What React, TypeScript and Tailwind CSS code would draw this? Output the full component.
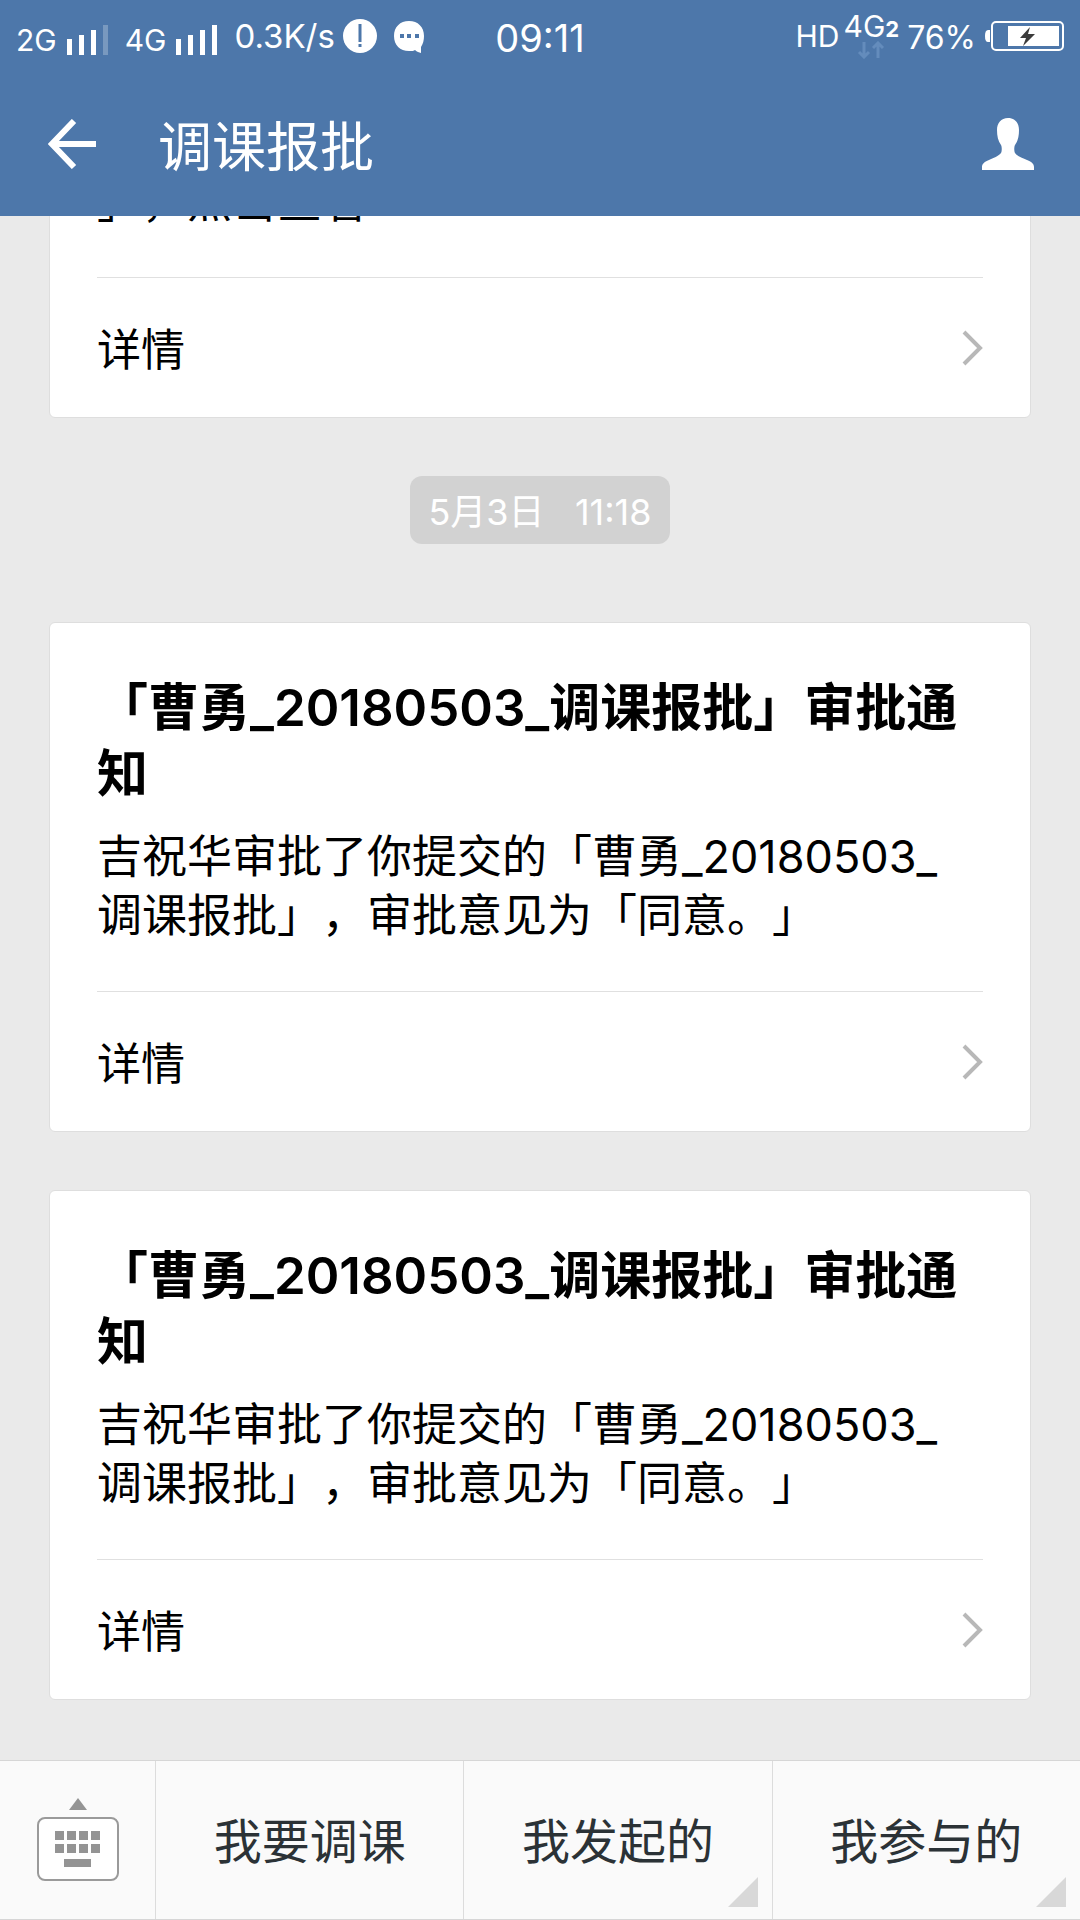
import type { ReactNode } from "react";

type ApprovalCardProps = {
  title?: string;
  children: ReactNode;
};

function SignalBars({ weak = false }: { weak?: boolean }) {
  return (
    <svg width="42" height="30" viewBox="0 0 42 30" fill="currentColor" aria-hidden="true">
      <rect x="0" y="14" width="5" height="16" />
      <rect x="12" y="10" width="5" height="20" />
      <rect x="24" y="5" width="5" height="25" />
      <rect x="36" y="0" width="5" height="30" opacity={weak ? 0.25 : 1} />
    </svg>
  );
}

function StatusBar() {
  return (
    <div className="grid h-[72px] grid-cols-[1fr_auto_1fr] items-center px-4 text-[32px] leading-[36px]">
      <div className="flex items-center">
        <span className="pt-2 text-[30px]">2G</span>
        <span className="ml-2.5 pt-2">
          <SignalBars weak />
        </span>
        <span className="ml-4 pt-2 text-[30px]">4G</span>
        <span className="ml-2.5 pt-2">
          <SignalBars />
        </span>
        <span className="ml-4 text-[33px]">0.3K/s</span>
        <svg className="ml-2" width="34" height="34" viewBox="0 0 34 34" aria-hidden="true">
          <circle cx="17" cy="17" r="17" fill="white" />
          <path d="M17 5v18M17 25v3" stroke="#4d77aa" strokeWidth="3" />
        </svg>
        <svg className="ml-4" width="32" height="34" viewBox="0 0 32 34" aria-hidden="true">
          <path d="M16 2C7 2 1 8 1 17s6 15 15 15c3 0 5 0 6-1 2 2 4 2 6 3v-6c2-3 3-7 3-11C31 8 25 2 16 2Z" fill="white" />
          <path d="M7 15h4v4H7zM14 15h4v4h-4zM22 15h4v4h-4z" fill="#4d77aa" />
        </svg>
      </div>
      <time className="pt-1 text-[38px]">09:11</time>
      <div className="flex items-center justify-end">
        <span className="text-[30px]">HD</span>
        <div className="ml-1 flex flex-col items-center">
          <span className="text-[30px] leading-[24px]">
            4G<b className="text-[22px]">2</b>
          </span>
          <svg width="28" height="18" viewBox="0 0 28 18" fill="none" stroke="#648cbc" strokeWidth="3" aria-hidden="true">
            <path d="M7 1v15M2 11l5 5 5-5M21 17V2M16 7l5-5 5 5" />
          </svg>
        </div>
        <span className="ml-2 pt-1">76%</span>
        <svg className="ml-2" width="80" height="32" viewBox="0 0 80 32" aria-hidden="true">
          <path d="M6 10H4q-3 0-3 6t3 6h2z" fill="white" />
          <rect x="8" y="2" width="71" height="28" rx="4" fill="none" stroke="white" strokeWidth="2" />
          <rect x="24" y="6" width="51" height="20" fill="white" />
          <path d="m46 7-10 11h6l-3 8 12-12h-7z" fill="#3b3b3b" />
        </svg>
      </div>
    </div>
  );
}

function NavBar() {
  return (
    <div className="flex h-36 items-center pl-12 pr-[46px]">
      <button type="button" aria-label="返回">
        <svg width="48" height="50" viewBox="0 0 48 50" fill="none" stroke="white" strokeWidth="6" aria-hidden="true">
          <path d="M26 2 4 25l22 23M4 25h44" />
        </svg>
      </button>
      <h1 className="ml-[62px] flex-1 pt-2 text-[54px] leading-[60px]">调课报批</h1>
      <button type="button" aria-label="个人资料">
        <svg width="52" height="52" viewBox="0 0 52 52" fill="white" aria-hidden="true">
          <path d="M26 0c7 0 11 5 11 12 0 6-1 11-4 15-1 2-1 6 0 8 2 3 8 5 12 7 5 2 7 4 7 7v3H0v-3c0-3 2-5 7-7 4-2 10-4 12-7 1-2 1-6 0-8-3-4-4-9-4-15C15 5 19 0 26 0Z" />
        </svg>
      </button>
    </div>
  );
}

function ApprovalCard({ title, children }: ApprovalCardProps) {
  return (
    <article className="shrink-0 rounded-md border border-[#dedede] bg-white px-[47px] pt-[52px] text-black">
      {title && <h2 className="mb-5 text-[51px] font-semibold leading-[66px]">{title}</h2>}
      <p className="text-[45px] leading-[59px]">{children}</p>
      <a href="#detail" className="mt-[46px] flex h-[140px] items-center justify-between border-t border-[#e0e0e0] text-[44px] leading-[59px]">
        <span className="pt-1.5">详情</span>
        <svg width="21" height="36" viewBox="0 0 21 36" fill="none" stroke="#b8b8b8" strokeWidth="4" aria-hidden="true">
          <path d="m2 2 16 16L2 34" />
        </svg>
      </a>
    </article>
  );
}

function MenuButton({ label, hasMenu = false }: { label: string; hasMenu?: boolean }) {
  return (
    <button type="button" className="relative flex-1 border-l border-[#dcdcdc] pt-1 text-[48px] text-[#2b3236]">
      {label}
      {hasMenu && (
        <svg className="absolute bottom-3 right-3.5" width="30" height="30" viewBox="0 0 30 30" aria-hidden="true">
          <path d="M30 0v30H0z" fill="#d8d8d8" />
        </svg>
      )}
    </button>
  );
}

function BottomMenu() {
  return (
    <nav className="flex h-[160px] shrink-0 border-y border-[#d6d6d6] bg-[#fafafa]">
      <button type="button" aria-label="键盘" className="flex w-[155px] items-center justify-center">
        <svg width="82" height="84" viewBox="0 0 82 84" fill="#949494" aria-hidden="true">
          <path d="M41 0l9 12H32z" />
          <rect x="1" y="20" width="80" height="62" rx="7" fill="white" stroke="#9a9a9a" strokeWidth="2" />
          <path d="M18 33h9v9h-9zM30 33h9v9h-9zM42 33h9v9h-9zM54 33h9v9h-9zM18 46h9v9h-9zM30 46h9v9h-9zM42 46h9v9h-9zM54 46h9v9h-9zM27 61h27v8H27z" />
        </svg>
      </button>
      <MenuButton label="我要调课" />
      <MenuButton label="我发起的" hasMenu />
      <MenuButton label="我参与的" hasMenu />
    </nav>
  );
}

export default function App() {
  return (
    <div className="flex h-screen flex-col bg-[#eaeaea] font-[Inter,'Noto_Sans_CJK_SC',sans-serif] [text-spacing-trim:space-all]">
      <header className="shrink-0 bg-[#4d77aa] text-white">
        <StatusBar />
        <NavBar />
      </header>

      {/* Messages stick to the bottom, older ones slide under the header */}
      <main className="flex min-h-0 flex-1 flex-col justify-end overflow-hidden px-[49px] pb-[60px]">
        <ApprovalCard>」，点击查看</ApprovalCard>
        <time className="mb-[78px] mt-[58px] shrink-0 self-center whitespace-pre rounded-xl bg-[#d2d2d2] px-[18px] pt-1 text-[36px] leading-[64px] text-white">
          5月3日   11:18
        </time>
        <div className="flex shrink-0 flex-col gap-[58px]">
          <ApprovalCard title="「曹勇_20180503_调课报批」审批通知">
            吉祝华审批了你提交的「曹勇_20180503_
            <br />
            调课报批」，审批意见为「同意。」
          </ApprovalCard>
          <ApprovalCard title="「曹勇_20180503_调课报批」审批通知">
            吉祝华审批了你提交的「曹勇_20180503_
            <br />
            调课报批」，审批意见为「同意。」
          </ApprovalCard>
        </div>
      </main>

      <BottomMenu />
    </div>
  );
}
